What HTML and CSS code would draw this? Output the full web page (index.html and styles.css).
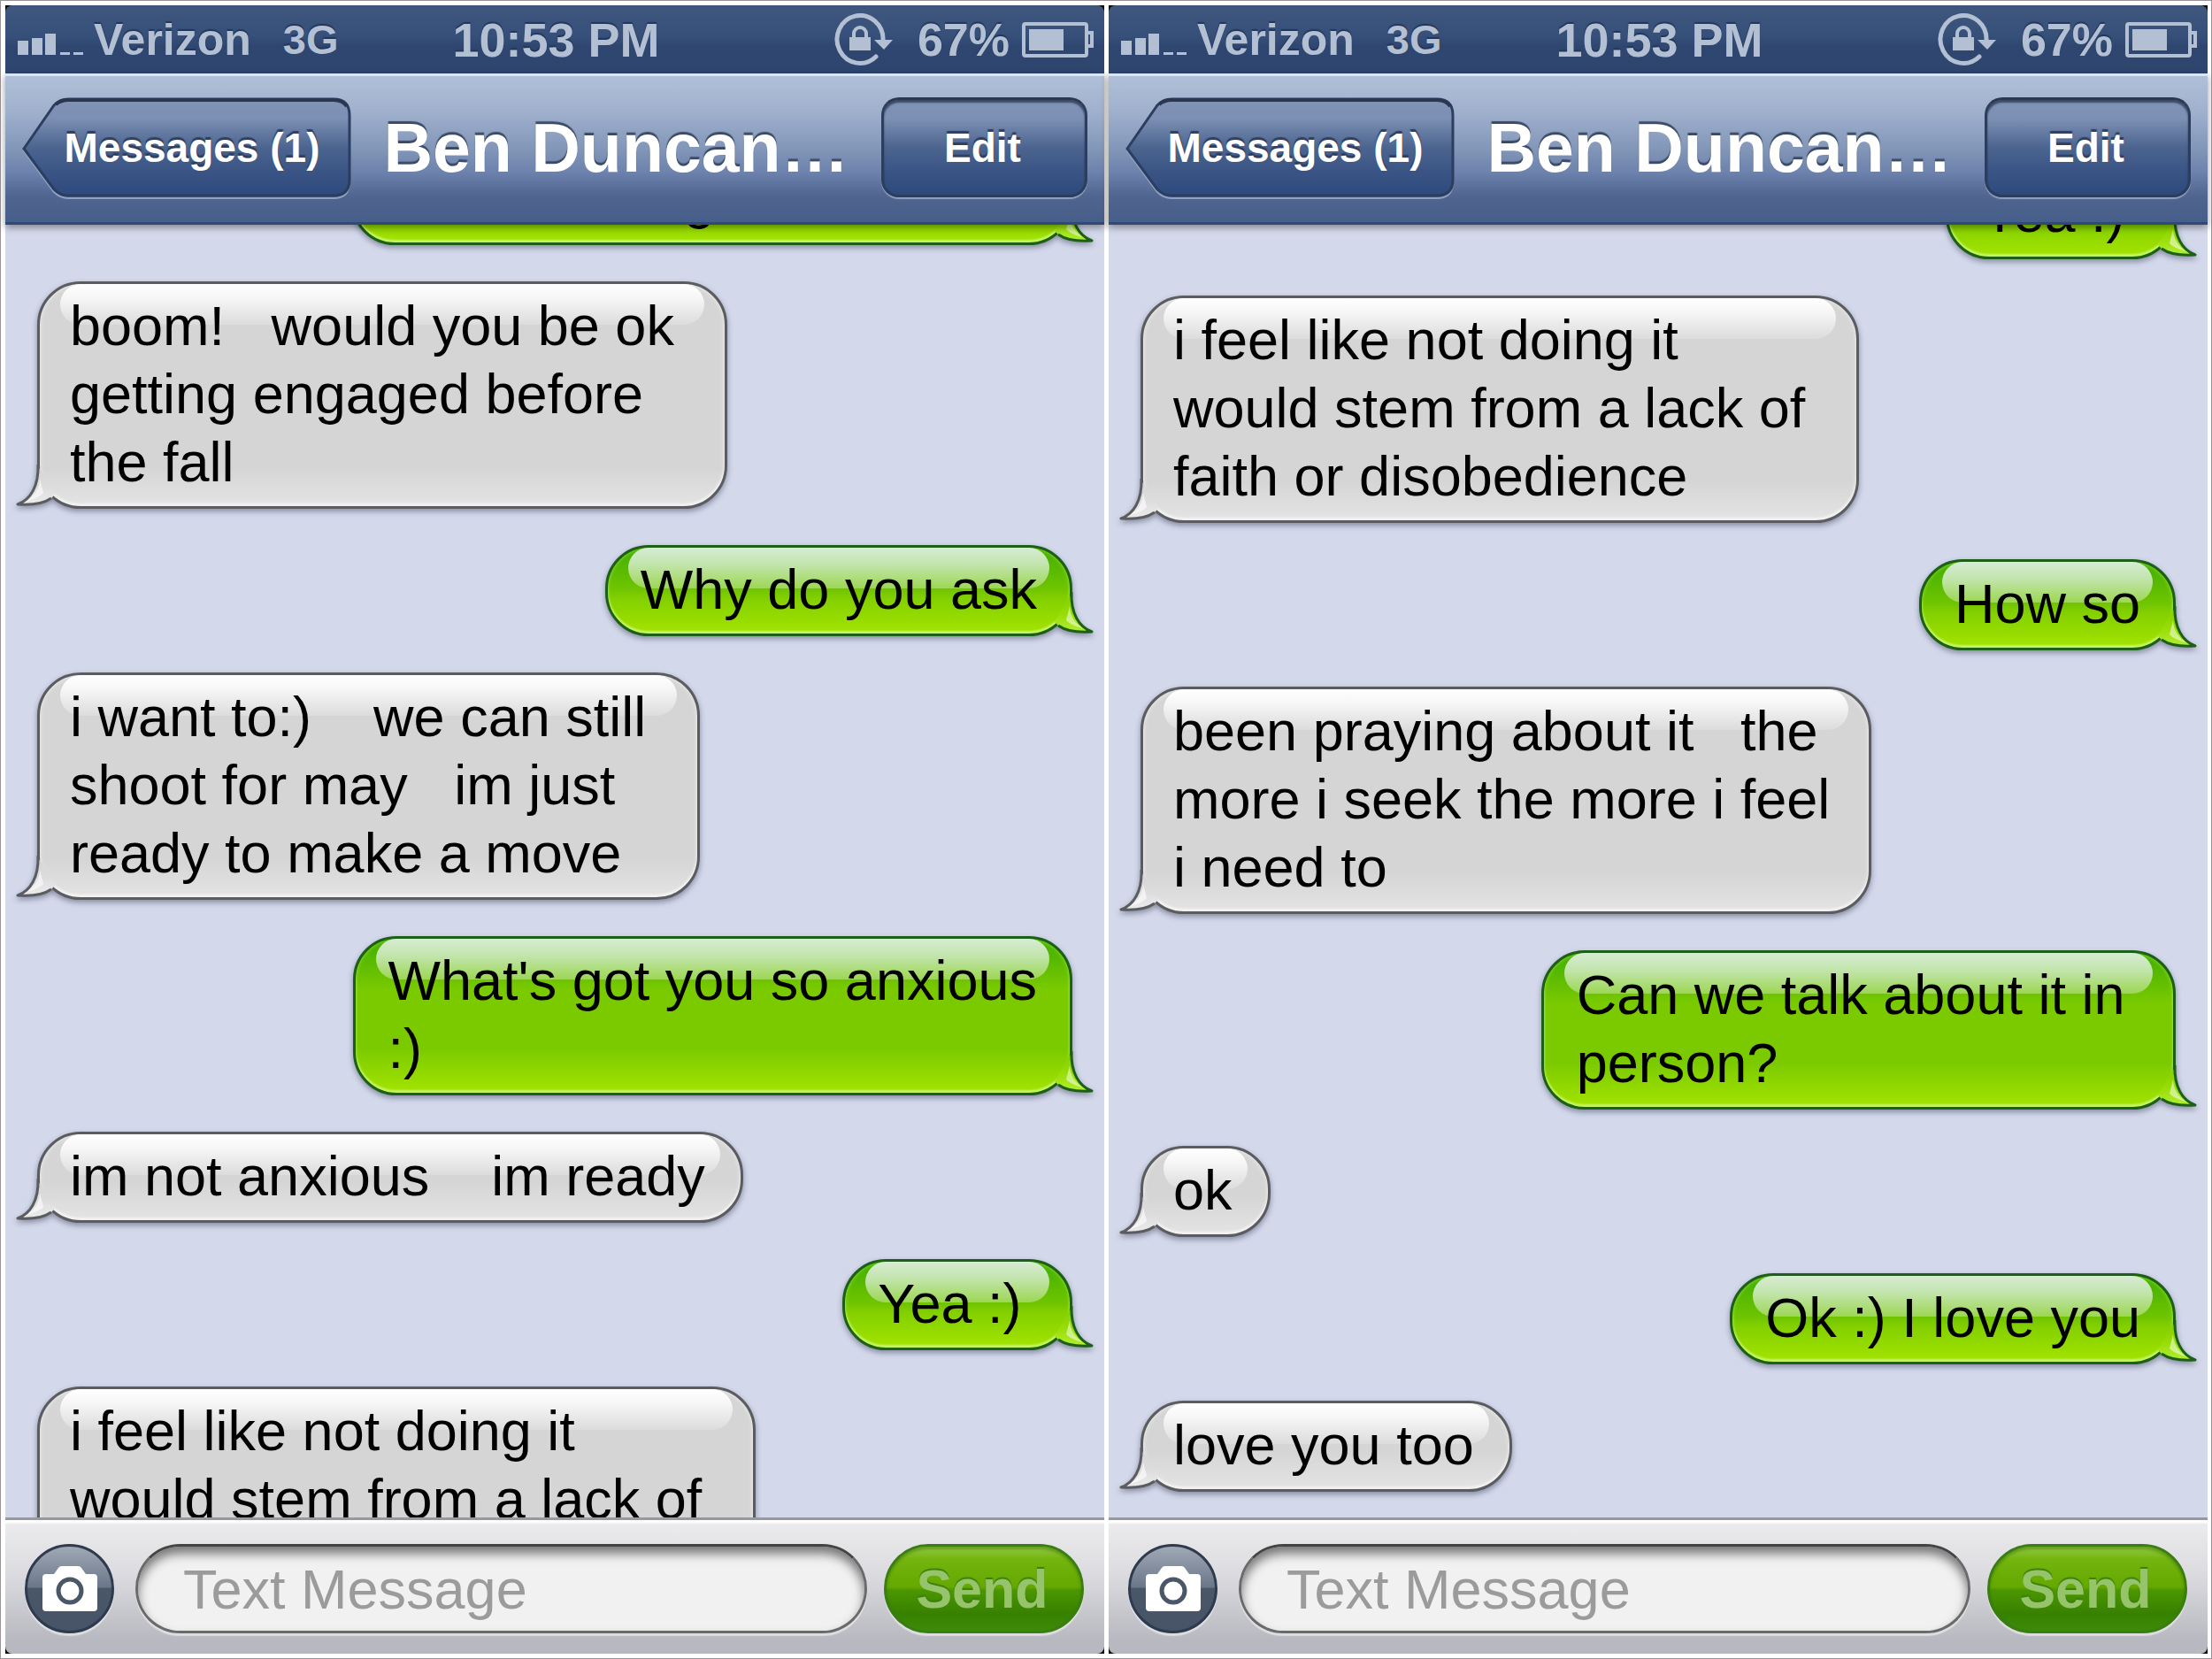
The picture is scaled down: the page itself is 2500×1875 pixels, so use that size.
FILE: index.html
```html
<!DOCTYPE html>
<html lang="en">
<head>
    <meta charset="UTF-8">
    <meta name="viewport" content="width=device-width, initial-scale=1.0">
    <title>Messages - Ben Duncan</title>
    <link rel="stylesheet" href="styles.css">
</head>
<body>
    <!-- Shared icons -->
    <svg class="sprite" aria-hidden="true">
        <defs>
            <linearGradient id="back-fill" x1="0" y1="0" x2="0" y2="1">
                <stop offset="0" stop-color="#8194b6"/>
                <stop offset="0.2" stop-color="#7c8fb4"/>
                <stop offset="0.5" stop-color="#4c658f"/>
                <stop offset="0.75" stop-color="#3a5485"/>
                <stop offset="1" stop-color="#2e4a7c"/>
            </linearGradient>
            <linearGradient id="tail-gray" x1="0" y1="0" x2="0" y2="1">
                <stop offset="0" stop-color="#d6d6d6"/>
                <stop offset="0.5" stop-color="#dcdcdc"/>
                <stop offset="1" stop-color="#ececec"/>
            </linearGradient>
            <linearGradient id="tail-green" x1="0" y1="0" x2="0" y2="1">
                <stop offset="0" stop-color="#84d000"/>
                <stop offset="0.5" stop-color="#97dc06"/>
                <stop offset="1" stop-color="#b0ee30"/>
            </linearGradient>
        </defs>
        <symbol id="signal" viewBox="0 0 74 24">
            <path d="M0 8h12v16H0zM16 5h12v19H16zM31 0h12v24H31zM48 21h11v3H48zM63 21h11v3H63z"/>
        </symbol>
        <symbol id="rotation-lock" viewBox="0 0 68 60">
            <path d="M55 31A26 27 0 1 0 47 49" fill="none" stroke="currentColor" stroke-width="5" stroke-linecap="round"/>
            <path d="M45 30h21L56 41z"/>
            <path d="M17 27h24v15H17z"/>
            <path d="M22 28v-5a7 7 0 0 1 14 0v5" fill="none" stroke="currentColor" stroke-width="4"/>
        </symbol>
        <symbol id="battery" viewBox="0 0 82 40">
            <rect x="2" y="2" width="71" height="36" rx="2" fill="none" stroke="currentColor" stroke-width="4"/>
            <path d="M74 12h5v15h-5" fill="none" stroke="currentColor" stroke-width="4"/>
            <path d="M8 8h39v24H8z"/>
        </symbol>
        <symbol id="camera" viewBox="0 0 62 52">
            <path d="M4 9h9l5-7q1-2 4-2h18q3 0 4 2l5 7h9q4 0 4 4v34q0 4-4 4H4q-4 0-4-4V13q0-4 4-4z" fill="#fff"/>
            <circle cx="31" cy="28" r="13" fill="none" stroke="#4a5769" stroke-width="5"/>
        </symbol>
        <symbol id="tail-in" viewBox="0 0 54 52">
            <path d="M31 6L29 10C28 27 19 42 8 46C20 48 34 46 44 40L48 36Z" fill="url(#tail-gray)"/>
            <path d="M31 18C31 28 25 39 14 44C19 42 30 40 35 34Z" fill="#fff" opacity="0.6"/>
            <path d="M29 2C30 27 20 42 6 47C20 48 34 47 44 40" fill="none" stroke="#5b5c60" stroke-width="3" stroke-linejoin="round"/>
        </symbol>
        <symbol id="tail-out" viewBox="0 0 54 52">
            <path d="M31 6L29 10C28 27 19 42 8 46C20 48 34 46 44 40L48 36Z" fill="url(#tail-green)"/>
            <path d="M31 18C31 28 25 39 14 44C19 42 30 40 35 34Z" fill="#fff" opacity="0.5"/>
            <path d="M29 2C30 27 20 42 6 47C20 48 34 47 44 40" fill="none" stroke="#1c5f17" stroke-width="3" stroke-linejoin="round"/>
        </symbol>
        <symbol id="back-shape" viewBox="0 0 372 115" preserveAspectRatio="none">
            <path d="M2 61L36 11Q43 4 52 4H352Q370 4 370 22V96Q370 114 352 114H52Q43 114 36 107Z" fill="none" stroke="#8fa2c4" stroke-width="2"/>
            <path d="M2 58L36 9Q43 2 52 2H352Q370 2 370 20V93Q370 111 352 111H52Q43 111 36 104Z" fill="url(#back-fill)" stroke="#2c3e60" stroke-width="3"/>
            <path d="M38 8Q44 3 52 3H352Q362 3 367 10" fill="none" stroke="#2b3750" stroke-width="4"/>
        </symbol>
    </svg>

    <main class="screens">
        <section class="phone">
            <div class="status-bar">
                <div class="status-left">
                    <svg class="icon-signal"><use href="#signal"/></svg>
                    <span class="carrier">Verizon</span>
                    <span class="network">3G</span>
                </div>
                <span class="clock">10:53 PM</span>
                <div class="status-right">
                    <svg class="icon-lock"><use href="#rotation-lock"/></svg>
                    <span class="percent">67%</span>
                    <svg class="icon-battery"><use href="#battery"/></svg>
                </div>
            </div>
            <header class="nav-bar">
                <button class="nav-btn btn-back" type="button">
                    <svg class="back-shape"><use href="#back-shape"/></svg>
                    <span>Messages (1)</span>
                </button>
                <h1>Ben Duncan…</h1>
                <button class="nav-btn btn-edit" type="button">Edit</button>
            </header>
            <div class="messages">
                <div class="thread thread-middle">
                    <p class="bubble sent"><svg class="tail"><use href="#tail-out"/></svg>Sure, coming home soon! </p>
                    <p class="bubble received"><svg class="tail"><use href="#tail-in"/></svg>boom!   would you be ok 
getting engaged before 
the fall</p>
                    <p class="bubble sent"><svg class="tail"><use href="#tail-out"/></svg>Why do you ask</p>
                    <p class="bubble received"><svg class="tail"><use href="#tail-in"/></svg>i want to:)    we can still 
shoot for may   im just 
ready to make a move</p>
                    <p class="bubble sent"><svg class="tail"><use href="#tail-out"/></svg>What's got you so anxious
:)</p>
                    <p class="bubble received"><svg class="tail"><use href="#tail-in"/></svg>im not anxious    im ready</p>
                    <p class="bubble sent"><svg class="tail"><use href="#tail-out"/></svg>Yea :) </p>
                    <p class="bubble received"><svg class="tail"><use href="#tail-in"/></svg>i feel like not doing it 
would stem from a lack of 
faith or disobedience</p>
                </div>
            </div>
            <form class="compose">
                <button class="btn-camera" type="button" aria-label="Attach photo"><svg class="icon-camera"><use href="#camera"/></svg></button>
                <input class="message-input" type="text" placeholder="Text Message" aria-label="Text Message">
                <button class="btn-send" type="button">Send</button>
            </form>
        </section>

        <section class="phone">
            <div class="status-bar">
                <div class="status-left">
                    <svg class="icon-signal"><use href="#signal"/></svg>
                    <span class="carrier">Verizon</span>
                    <span class="network">3G</span>
                </div>
                <span class="clock">10:53 PM</span>
                <div class="status-right">
                    <svg class="icon-lock"><use href="#rotation-lock"/></svg>
                    <span class="percent">67%</span>
                    <svg class="icon-battery"><use href="#battery"/></svg>
                </div>
            </div>
            <header class="nav-bar">
                <button class="nav-btn btn-back" type="button">
                    <svg class="back-shape"><use href="#back-shape"/></svg>
                    <span>Messages (1)</span>
                </button>
                <h1>Ben Duncan…</h1>
                <button class="nav-btn btn-edit" type="button">Edit</button>
            </header>
            <div class="messages">
                <div class="thread thread-end">
                    <p class="bubble sent"><svg class="tail"><use href="#tail-out"/></svg>Yea :) </p>
                    <p class="bubble received"><svg class="tail"><use href="#tail-in"/></svg>i feel like not doing it 
would stem from a lack of 
faith or disobedience</p>
                    <p class="bubble sent"><svg class="tail"><use href="#tail-out"/></svg>How so</p>
                    <p class="bubble received"><svg class="tail"><use href="#tail-in"/></svg>been praying about it   the 
more i seek the more i feel
i need to</p>
                    <p class="bubble sent"><svg class="tail"><use href="#tail-out"/></svg>Can we talk about it in 
person?</p>
                    <p class="bubble received"><svg class="tail"><use href="#tail-in"/></svg>ok</p>
                    <p class="bubble sent"><svg class="tail"><use href="#tail-out"/></svg>Ok :) I love you</p>
                    <p class="bubble received"><svg class="tail"><use href="#tail-in"/></svg>love you too</p>
                </div>
            </div>
            <form class="compose">
                <button class="btn-camera" type="button" aria-label="Attach photo"><svg class="icon-camera"><use href="#camera"/></svg></button>
                <input class="message-input" type="text" placeholder="Text Message" aria-label="Text Message">
                <button class="btn-send" type="button">Send</button>
            </form>
        </section>
    </main>
</body>
</html>
```

FILE: styles.css
```css
* {
    margin: 0;
    padding: 0;
    box-sizing: border-box;
    font-family: "Liberation Sans", Arial, Helvetica, sans-serif;
}

body {
    background-color: #fff;
    color: #000;
}

.sprite {
    position: absolute;
    width: 0;
    height: 0;
}

.screens {
    display: grid;
    grid-template-columns: 1fr 1fr;
    gap: 5px;
    height: 100vh;
    padding: 5px 4px 5px 5px;
    border: 1px solid #9a9498;
}

.phone {
    display: flex;
    flex-direction: column;
    min-width: 0;
    min-height: 0;
    background-color: #000;
}

/* Status bar */
.status-bar {
    display: grid;
    grid-template-columns: 1fr auto 1fr;
    align-items: center;
    height: 77px;
    padding: 0 11px 0 14px;
    border-radius: 8px 8px 0 0;
    background: linear-gradient(#40577d, #36507a 45%, #2f4770 60%, #2e456e);
    color: #b3bfd2;
    fill: #b3bfd2;
    font-weight: bold;
    text-shadow: 0 -2px 1px #22365a;
    white-space: nowrap;
}

.status-left,
.status-right {
    display: flex;
    align-items: center;
}

.status-right {
    justify-content: flex-end;
}

.icon-signal {
    width: 74px;
    height: 24px;
    margin: 10px 12px 0 0;
}

.carrier {
    margin-right: 36px;
    font-size: 50px;
}

.network {
    font-size: 47px;
}

.clock {
    font-size: 54px;
}

.percent {
    margin: 0 14px 0 26px;
    font-size: 52px;
}

.icon-lock {
    width: 68px;
    height: 60px;
}

.icon-battery {
    width: 82px;
    height: 40px;
}

/* Navigation bar */
.nav-bar {
    position: relative;
    z-index: 1;
    display: flex;
    justify-content: space-between;
    align-items: center;
    padding: 24px 19px 28px;
    border-top: 3px solid #dbe5f1;
    border-bottom: 3px solid #2e4a7a;
    background: linear-gradient(#b0c0d8, #9fb0cd 25%, #8296b8 50%, #6e83ad 65%, #50658f 82%, #465e8a);
    box-shadow: 0 3px 8px rgba(0, 0, 0, 0.4);
}

.nav-bar h1 {
    color: #fff;
    font-size: 77px;
    line-height: 80px;
    text-shadow: 0 -3px 1px #3a4a66;
    white-space: nowrap;
}

.nav-btn {
    height: 113px;
    color: #fff;
    font-size: 46px;
    font-weight: bold;
    text-shadow: 0 -3px 1px #2f3f60;
    white-space: nowrap;
    cursor: pointer;
}

.btn-back {
    position: relative;
    width: 372px;
    padding-left: 12px;
    border: none;
    background: none;
}

.btn-back span {
    position: relative;
}

.back-shape {
    position: absolute;
    top: 0;
    left: 0;
    width: 100%;
    height: 115px;
}

.btn-edit {
    width: 233px;
    padding-right: 4px;
    border: 3px solid #2c3e60;
    border-top-color: #2b3750;
    border-radius: 20px;
    background: linear-gradient(#8194b6, #7c8fb4 20%, #4c658f 50%, #3a5485 75%, #2e4a7c);
    box-shadow: 0 2px 1px #8fa2c4, inset 0 3px 2px rgba(30, 42, 66, 0.7);
}

/* Conversation */
.messages {
    flex: 1;
    min-height: 0;
    overflow: hidden;
    background-color: #d3d8eb;
}

.thread {
    display: flex;
    flex-direction: column;
    align-items: flex-start;
    gap: 41px;
    padding: 0 36px;
}

/* How far each thread is scrolled under the navigation bar */
.thread-middle {
    margin-top: -80px;
}

.thread-end {
    margin-top: -64px;
}

.bubble {
    position: relative;
    flex-shrink: 0;
    border: 3px solid #5b5c60;
    border-radius: 49px;
    font-size: 63px;
    line-height: 77px;
    white-space: pre;
    filter: drop-shadow(0 3px 3px rgba(20, 25, 50, 0.4));
}

.bubble::before {
    content: "";
    position: absolute;
    z-index: -1;
    top: 0;
    left: 23px;
    right: 23px;
    height: 46px;
    border-radius: 26px;
    background: linear-gradient(#fff, #f6f6f6 35%, #dcdcdc);
}

.tail {
    position: absolute;
    z-index: -1;
    bottom: -3px;
    left: -31px;
    width: 54px;
    height: 52px;
}

.received {
    padding: 9px 40px 11px 34px;
    background:
        linear-gradient(rgba(226, 226, 226, 0), #e4e4e4) bottom / 100% 44px no-repeat,
        #d5d5d5;
    background-origin: padding-box;
    box-shadow: inset 0 -3px 2px #f2f2f2, inset 0 0 5px #f0f0f0;
}

.sent {
    align-self: flex-end;
    padding: 9px 37px 11px;
    border-color: #1c5f17;
    background:
        linear-gradient(rgba(164, 230, 0, 0), #a4e400) bottom / 100% 50px no-repeat,
        linear-gradient(#3fae00, #7bca00) top / 100% 58px no-repeat,
        #7bca00;
    background-origin: padding-box;
    box-shadow: inset 0 -3px 2px #c4f565, inset 0 0 4px #9be02e;
}

.sent::before {
    background: linear-gradient(#d6ecd4, #c3e5ae 40%, #9dd754);
}

.sent .tail {
    right: -31px;
    left: auto;
    transform: scaleX(-1);
}

/* Compose bar */
.compose {
    position: relative;
    z-index: 1;
    display: flex;
    align-items: center;
    gap: 19px;
    padding: 27px 23px 23px 22px;
    border-top: 3px solid #98999e;
    border-radius: 0 0 8px 8px;
    background: linear-gradient(#fff 2px, #ebebed 5px, #dcdce0 40%, #b8b9c0 90%);
}

.btn-camera {
    display: flex;
    justify-content: center;
    align-items: center;
    width: 101px;
    height: 101px;
    margin-right: 5px;
    border: 3px solid #2e3a4e;
    border-radius: 50%;
    background: linear-gradient(#a0a8b6, #6b7789 48%, #4a5769 50%, #475468);
    box-shadow: 0 3px 1px rgba(255, 255, 255, 0.5);
    cursor: pointer;
}

.icon-camera {
    width: 62px;
    height: 52px;
}

.message-input {
    flex: 1;
    min-width: 0;
    height: 101px;
    padding: 0 51px;
    border: 3px solid #6a6a6c;
    border-top-color: #444;
    border-radius: 51px;
    background-color: #f1f1f1;
    box-shadow: inset 0 8px 12px rgba(0, 0, 0, 0.5), 0 3px 1px rgba(255, 255, 255, 0.5);
    font-size: 63px;
}

.message-input::placeholder {
    color: #9b9b9b;
}

.btn-send {
    width: 226px;
    height: 101px;
    padding-right: 4px;
    border: 3px solid #3a7d12;
    border-radius: 51px;
    background: linear-gradient(#93c840, #74b510 15%, #64a800 48%, #4b9600 52%, #378100 80%, #3f8a08);
    box-shadow: 0 3px 1px rgba(255, 255, 255, 0.5), inset 0 3px 3px rgba(40, 100, 0, 0.4);
    color: #96c46a;
    font-size: 61px;
    font-weight: bold;
    text-shadow: 0 -2px 1px #3f7d10;
    cursor: pointer;
}
```
